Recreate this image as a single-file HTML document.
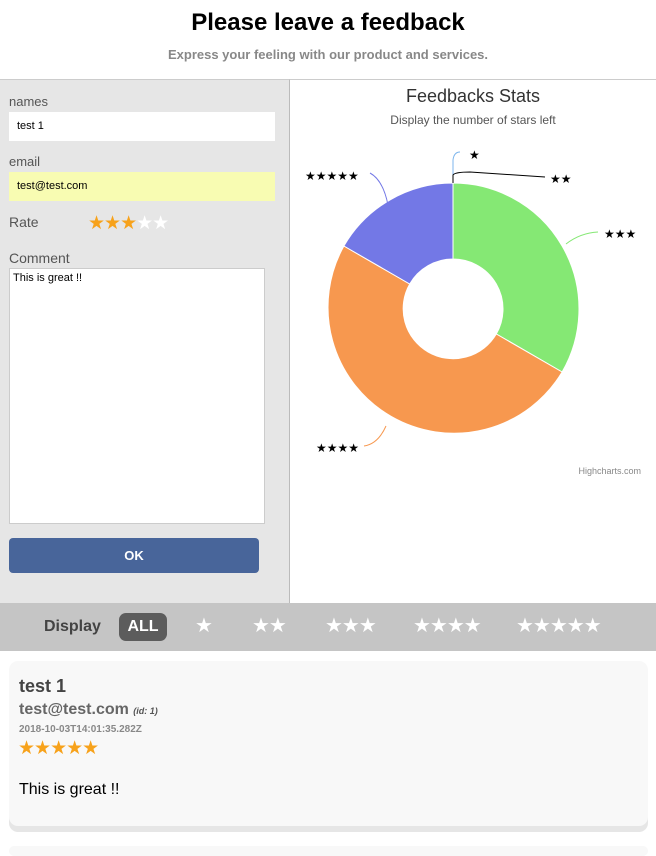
<!DOCTYPE html>
<html><head><meta charset="utf-8"><style>
*{box-sizing:border-box;margin:0;padding:0}
body{width:656px;height:849px;overflow:hidden;background:#fff;font-family:"Liberation Sans",Arial,sans-serif;position:relative}
.abs{position:absolute}
h1{position:absolute;top:9px;left:0;width:656px;text-align:center;font-size:24px;font-weight:bold;color:#000}
.sub{top:47px;left:0;width:656px;text-align:center;font-size:13px;font-weight:bold;color:#888}
.left{top:79px;left:0;width:290px;height:524px;background:#e6e6e6;border-right:1px solid #bbb;border-top:1px solid #ccc}
.right{top:79px;left:290px;width:366px;height:524px;border-top:1px solid #ccc}
.lbl{font-size:13px;color:#555}
.inp{background:#fff;font-size:11px;color:#000;padding-left:8px;line-height:29px;height:29px;width:266px;left:9px}
.bar{top:603px;left:0;width:656px;height:48px;background:#c5c5c5}
.card{top:661px;left:9px;width:639px;height:165px;background:#f8f8f8;border-radius:9px;box-shadow:0 6px 0 #e6e6e6}
.st{font-family:"DejaVu Sans",sans-serif;letter-spacing:-1px}
</style></head><body>
<h1>Please leave a feedback</h1>
<div class="abs sub">Express your feeling with our product and services.</div>
<div class="abs left"></div>
<div class="abs lbl" style="top:94px;left:9px">names</div>
<div class="abs inp" style="top:112px">test 1</div>
<div class="abs lbl" style="top:154px;left:9px">email</div>
<div class="abs inp" style="top:172px;background:#f8fcb2">test@test.com</div>
<div class="abs lbl" style="top:214px;left:9px;font-size:14px">Rate</div>
<div class="abs st" style="top:212px;left:88px;font-size:19px"><span style="color:#f7a21b">★★★</span><span style="color:#fff">★★</span></div>
<div class="abs lbl" style="top:250px;left:9px;font-size:14px">Comment</div>
<div class="abs" style="top:268px;left:9px;width:256px;height:256px;background:#fff;border:1px solid #ccc;font-size:11px;padding:3px">This is great !!</div>
<div class="abs" style="top:538px;left:9px;width:250px;height:35px;background:#48659a;border-radius:4px;color:#fff;font-size:13px;font-weight:bold;text-align:center;line-height:35px">OK</div>
<div class="abs right"></div>
<div class="abs" style="top:86px;left:290px;width:366px;text-align:center;font-size:18px;color:#333">Feedbacks Stats</div>
<div class="abs" style="top:113px;left:290px;width:366px;text-align:center;font-size:12px;color:#555">Display the number of stars left</div>
<svg class="abs" style="top:0;left:0" width="656" height="600">
<path d="M453,183 A126,126 0 0 1 562.1,372 L496.3,334 A50,50 0 0 0 453,259Z" fill="#85e874" stroke="#fff"/>
<path d="M562.1,372 A126,126 0 0 1 343.9,246 L409.7,284 A50,50 0 0 0 496.3,334Z" fill="#f7984f" stroke="#fff"/>
<path d="M343.9,246 A126,126 0 0 1 453,183 L453,259 A50,50 0 0 0 409.7,284Z" fill="#7378e6" stroke="#fff"/>
<path d="M453,183 L453,160 Q454,152 460,152" fill="none" stroke="#7cb5ec"/>
<path d="M453,183 L453,175 Q455,172 470,172 L545,177" fill="none" stroke="#000"/>
<path d="M566,244 Q580,233 598,232" fill="none" stroke="#85e874"/>
<path d="M388,205 Q383,180 370,173" fill="none" stroke="#7378e6"/>
<path d="M386,426 Q378,444 364,446" fill="none" stroke="#f7984f"/>
<g font-size="12" fill="#000" font-family="DejaVu Sans,sans-serif">
<text x="469" y="159">★</text><text x="550" y="183">★★</text><text x="604" y="238">★★★</text>
<text x="316" y="452">★★★★</text><text x="305" y="180">★★★★★</text></g>
<text x="641" y="474" font-size="9" fill="#888" text-anchor="end">Highcharts.com</text>
</svg>
<div class="abs bar"></div>
<div class="abs" style="top:618px;left:44px;font-size:16px;font-weight:bold;color:#444">Display</div>
<div class="abs" style="top:613px;left:119px;width:48px;height:28px;background:#5c5c5c;border-radius:7px;color:#fff;font-size:16px;font-weight:bold;text-align:center;line-height:28px">ALL</div>
<div class="abs st" style="top:613px;left:0;color:#fff;font-size:20px">
<span class="abs" style="left:195px">★</span><span class="abs" style="left:252px">★★</span><span class="abs" style="left:325px">★★★</span><span class="abs" style="left:413px">★★★★</span><span class="abs" style="left:516px">★★★★★</span></div>
<div class="abs card"></div>
<div class="abs" style="top:676px;left:19px;font-size:18px;font-weight:bold;color:#444">test 1</div>
<div class="abs" style="top:701px;left:19px;font-size:16px;font-weight:bold;color:#666">test@test.com <i style="font-size:9px;color:#555">(id: 1)</i></div>
<div class="abs" style="top:724px;left:19px;font-size:10px;font-weight:bold;color:#888">2018-10-03T14:01:35.282Z</div>
<div class="abs st" style="top:737px;left:18px;font-size:19px;color:#f7a21b">★★★★★</div>
<div class="abs" style="top:781px;left:19px;font-size:16px;color:#000">This is great !!</div>
<div class="abs" style="top:846px;left:9px;width:639px;height:10px;background:#f8f8f8;border-radius:9px"></div>
</body></html>
